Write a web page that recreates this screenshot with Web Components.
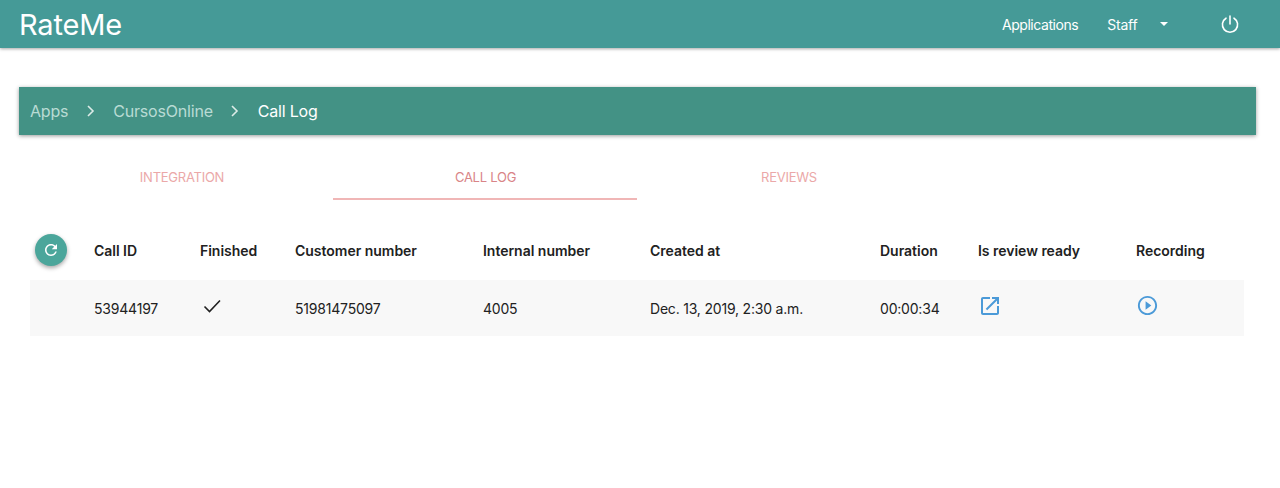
<!DOCTYPE html>
<html>
<head>
<meta charset="utf-8">
<title>RateMe</title>
<style>
    html, body { margin: 0; padding: 0; background: #fff; }
    body { font-family: Inter, "Liberation Sans", sans-serif; width: 1280px; height: 488px; overflow: hidden; }
</style>
</head>
<body>
<app-nav></app-nav>
<crumb-bar></crumb-bar>
<tab-strip></tab-strip>
<call-table></call-table>

<script>
// Top bar: brand on the left, links and the power icon on the right
class AppNav extends HTMLElement {
    constructor() {
        super();
        this.attachShadow({ mode: 'open' });
        this.shadowRoot.innerHTML = `
            <style>
                :host {
                    display: flex;
                    align-items: center;
                    height: 48px;
                    padding: 0 40px 0 19px;
                    background: #459a97;
                    color: #fff;
                    box-shadow: 0 1px 3px rgba(0,0,0,.35);
                }
                .brand { font-size: 29px; letter-spacing: -.15px; flex: 1; }
                .link { font-size: 14px; letter-spacing: -.45px; }
                .staff { margin-left: 29px; letter-spacing: -.2px; }
                .caret { margin-left: 22px; margin-right: .5px; width: 0; height: 0; border: 4.5px solid transparent; border-top-color: #fff; border-bottom: 0; }
                svg { margin-left: 52px; display: block; }
            </style>
            <span class="brand">RateMe</span>
            <span class="link">Applications</span>
            <span class="link staff">Staff</span>
            <span class="caret"></span>
            <svg width="20" height="20" viewBox="0 0 20 20" fill="none" stroke="#fff" stroke-width="1.6" stroke-linecap="round">
                <path d="M10 2v8"/>
                <path d="M6 4.2a7.6 7.6 0 1 0 8 0"/>
            </svg>
        `;
    }
}

// Breadcrumb bar below the top bar
class CrumbBar extends HTMLElement {
    constructor() {
        super();
        this.attachShadow({ mode: 'open' });
        this.shadowRoot.innerHTML = `
            <style>
                :host {
                    display: flex;
                    align-items: center;
                    height: 48px;
                    margin: 39px 24px 0 19px;
                    padding-left: 11px;
                    background: #439285;
                    color: #b9dbd4;
                    font-size: 16px;
                    letter-spacing: -.2px;
                    box-shadow: 0 1px 4px rgba(0,0,0,.4);
                }
                svg { display: block; margin: 0 17.5px; }
                .current { color: #fff; }
            </style>
            <span>Apps</span>
            <svg width="10" height="14" viewBox="0 0 10 14" fill="none" stroke="#dcebe8" stroke-width="1.6"><path d="M2 2l5 5-5 5"/></svg>
            <span>CursosOnline</span>
            <svg width="10" height="14" viewBox="0 0 10 14" fill="none" stroke="#dcebe8" stroke-width="1.6"><path d="M2 2l5 5-5 5"/></svg>
            <span class="current">Call Log</span>
        `;
    }
}

// Three equal tabs, the middle one is the active tab
class TabStrip extends HTMLElement {
    constructor() {
        super();
        this.attachShadow({ mode: 'open' });
        this.shadowRoot.innerHTML = `
            <style>
                :host {
                    display: grid;
                    grid-template-columns: repeat(3, 303.5px);
                    margin: 17px 0 0 29.5px;
                    font-size: 13px;
                    letter-spacing: -.25px;
                }
                div {
                    height: 48px;
                    padding: 2px 0 0 1.5px;
                    display: flex;
                    align-items: center;
                    justify-content: center;
                    color: #eba8a8;
                    box-sizing: border-box;
                }
                /* the border takes 2px off the box, so pad the text back down to line up with the others */
                .active { color: #d98487; padding-top: 4px; border-bottom: 2px solid #f0b6b6; }
            </style>
            <div>INTEGRATION</div>
            <div class="active">CALL LOG</div>
            <div>REVIEWS</div>
        `;
    }
}

// Call log table: header row with the refresh button, then one data row
class CallTable extends HTMLElement {
    constructor() {
        super();
        this.attachShadow({ mode: 'open' });
        this.shadowRoot.innerHTML = `
            <style>
                :host {
                    display: block;
                    margin: 20px 36px 0 30px;
                    color: #212121;
                    font-size: 14px;
                    letter-spacing: -.2px;
                }
                .row {
                    display: grid;
                    grid-template-columns: 64px 106px 95px 188px 167px 230px 98px 158px 108px;
                    align-items: center;
                }
                .head { height: 60px; font-weight: 600; letter-spacing: -.02px; }
                .body { height: 56px; background: #f8f8f8; }
                .refresh {
                    width: 32px;
                    height: 32px;
                    margin-left: 5px;
                    border-radius: 50%;
                    background: #4ba69b;
                    display: flex;
                    align-items: center;
                    justify-content: center;
                    box-shadow: 0 2px 4px rgba(0,0,0,.35);
                }
                svg { display: block; }
            </style>
            <div class="row head">
                <div>
                    <div class="refresh">
                        <svg width="18" height="18" viewBox="0 0 24 24" fill="#fff">
                            <path d="M17.65 6.35C16.2 4.9 14.21 4 12 4c-4.42 0-7.99 3.58-7.99 8s3.57 8 7.99 8c3.73 0 6.84-2.55 7.73-6h-2.08c-.82 2.33-3.04 4-5.65 4-3.31 0-6-2.69-6-6s2.69-6 6-6c1.66 0 3.14.69 4.22 1.78L13 11h7V4l-2.35 2.35z"/>
                        </svg>
                    </div>
                </div>
                <div>Call ID</div>
                <div>Finished</div>
                <div>Customer number</div>
                <div>Internal number</div>
                <div>Created at</div>
                <div>Duration</div>
                <div>Is review ready</div>
                <div>Recording</div>
            </div>
            <div class="row body">
                <div></div>
                <div>53944197</div>
                <div>
                    <svg style="margin:-5px 0 0 2px" width="20" height="16" viewBox="0 0 20 16" fill="none" stroke="#212121" stroke-width="1.6"><path d="M2.5 8.5l5 5L18 2.5"/></svg>
                </div>
                <div>51981475097</div>
                <div>4005</div>
                <div>Dec. 13, 2019, 2:30 a.m.</div>
                <div>00:00:34</div>
                <div>
                    <svg style="margin:-5px 0 0 -.5px" width="24" height="24" viewBox="0 0 24 24" fill="#4b9ad8">
                        <path d="M19 19H5V5h7V3H5c-1.11 0-2 .9-2 2v14c0 1.1.89 2 2 2h14c1.1 0 2-.9 2-2v-7h-2v7zM14 3v2h3.59l-9.83 9.83 1.41 1.41L19 6.41V10h2V3h-7z"/>
                    </svg>
                </div>
                <div>
                    <svg style="margin:-5px 0 0 .3px" width="23" height="23" viewBox="0 0 24 24" fill="#4b9ad8">
                        <path d="M10 16.5l6-4.5-6-4.5v9zM12 2C6.48 2 2 6.48 2 12s4.48 10 10 10 10-4.48 10-10S17.52 2 12 2zm0 18c-4.41 0-8-3.59-8-8s3.59-8 8-8 8 3.59 8 8-3.59 8-8 8z"/>
                    </svg>
                </div>
            </div>
        `;
    }
}

customElements.define('app-nav', AppNav);
customElements.define('crumb-bar', CrumbBar);
customElements.define('tab-strip', TabStrip);
customElements.define('call-table', CallTable);
</script>
</body>
</html>
